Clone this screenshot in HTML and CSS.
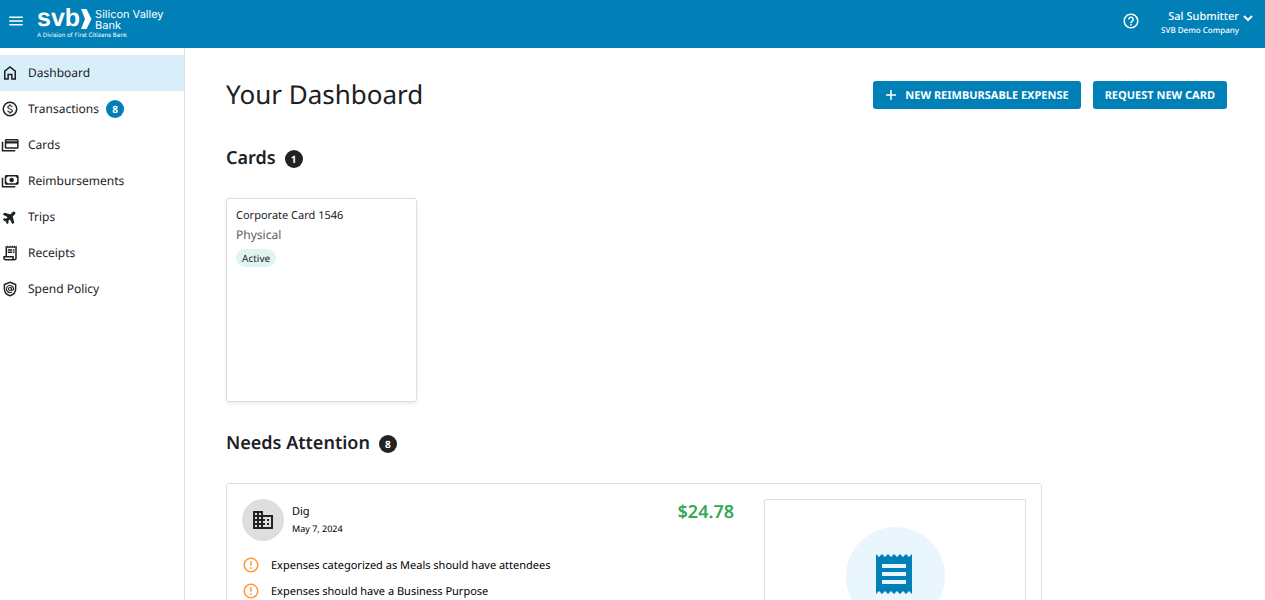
FILE: index.html
```html
<!DOCTYPE html>
<html lang="en">
<head>
<meta charset="utf-8">
<meta name="viewport" content="width=device-width, initial-scale=1">
<title>Your Dashboard</title>
<link rel="stylesheet" href="styles.css">
</head>
<body>
<header class="topbar">
  <button class="icon-button menu-button" type="button" aria-label="Menu">
    <svg viewBox="0 0 24 24" width="18" height="18"><path d="M3 18h18v-2H3v2zm0-5h18v-2H3v2zm0-7v2h18V6H3z"/></svg>
  </button>
  <div class="brand">
    <div class="brand-main">
      <span class="brand-mark">svb</span>
      <svg class="brand-chevron" viewBox="0 0 12 24" width="12" height="24"><path d="M1 2h5.500l5 10-5 10H1l4-10z"/></svg>
      <span class="brand-name"><span>Silicon Valley</span><span>Bank</span></span>
    </div>
    <span class="brand-tagline">A Division of First Citizens Bank</span>
  </div>
  <button class="icon-button help-button" type="button" aria-label="Help">
    <svg viewBox="0 0 24 24" width="18" height="18"><path d="M11 18h2v-2h-2v2zm1-16C6.48 2 2 6.48 2 12s4.48 10 10 10 10-4.48 10-10S17.52 2 12 2zm0 18c-4.41 0-8-3.59-8-8s3.59-8 8-8 8 3.59 8 8-3.59 8-8 8zm0-14c-2.21 0-4 1.79-4 4h2c0-1.1.9-2 2-2s2 .9 2 2c0 2-3 1.75-3 5h2c0-2.25 3-2.5 3-5 0-2.21-1.79-4-4-4z"/></svg>
  </button>
  <button class="account" type="button">
    <span class="account-text">
      <span class="account-name">Sal Submitter</span>
      <span class="account-company">SVB Demo Company</span>
    </span>
    <svg class="account-arrow" viewBox="0 0 12 12" width="12" height="12"><path d="M2 4l4 4 4-4"/></svg>
  </button>
</header>
<div class="body">
  <nav class="sidebar" aria-label="Main">
    <a class="nav-item active" href="#dashboard">
      <svg class="line" viewBox="0 0 24 24" width="18" height="18"><path d="M5 20V9.500l7-5.500 7 5.500V20h-4.500v-6h-5v6z"/></svg>
      <span>Dashboard</span></a>
    <a class="nav-item" href="#transactions">
      <svg class="line" viewBox="0 0 24 24" width="18" height="18"><circle cx="12" cy="12" r="9"/><path class="thin" d="M15 9.500C14.700 8.200 13.500 7.600 12 7.600c-1.700 0-2.900.8-2.900 2.100 0 3.100 6 1.500 6 4.600 0 1.300-1.200 2.100-3 2.100-1.700 0-3-.7-3.200-2.200M12 5.700v2M12 16.300v2"/></svg>
      <span>Transactions</span><span class="badge badge-blue">8</span></a>
    <a class="nav-item" href="#cards">
      <svg class="line" viewBox="0 0 24 24" width="18" height="18"><rect x="6" y="5" width="16.500" height="11" rx="1"/><path d="M6 8.500h16.500" stroke-width="3"/><path d="M2 7.500V19.500H19"/></svg>
      <span>Cards</span></a>
    <a class="nav-item" href="#reimbursements">
      <svg class="line" viewBox="0 0 24 24" width="18" height="18"><rect x="6" y="5" width="16.500" height="11" rx="1"/><path d="M2 7.500V19.500H19"/><circle class="solid" cx="14.200" cy="10.500" r="3"/><path class="solid" d="M6 5h3a3 3 0 0 1-3 3zM22.500 5h-3a3 3 0 0 0 3 3zM6 16h3a3 3 0 0 0-3-3zM22.500 16h-3a3 3 0 0 1 3-3z"/></svg>
      <span>Reimbursements</span></a>
    <a class="nav-item" href="#trips">
      <svg class="plane" viewBox="0 0 24 24" width="18" height="18"><path transform="translate(12 12) rotate(45) scale(.84) translate(-12 -12)" d="M22 16v-2l-8.500-5V3.500c0-.83-.67-1.500-1.500-1.500s-1.500.67-1.500 1.500V9L2 14v2l8.500-2.500V19L8 20.500V22l4-1 4 1v-1.500L13.500 19v-5.500L22 16z"/></svg>
      <span>Trips</span></a>
    <a class="nav-item" href="#receipts">
      <svg viewBox="0 0 24 24" width="18" height="18"><path d="M19.500 3.500L18 2l-1.500 1.500L15 2l-1.500 1.500L12 2l-1.500 1.500L9 2 7.500 3.500 6 2v14H3v3c0 1.660 1.340 3 3 3h12c1.660 0 3-1.340 3-3V2l-1.500 1.500zM15 20H6c-.55 0-1-.45-1-1v-1h10v2zm4-1c0 .55-.45 1-1 1s-1-.45-1-1v-3H8V5h11v14z"/><path d="M9 7h6v2H9zM16 7h2v2h-2zM9 10h6v2H9zM16 10h2v2h-2z"/></svg>
      <span>Receipts</span></a>
    <a class="nav-item" href="#policy">
      <svg class="line" viewBox="0 0 24 24" width="18" height="18"><path d="M12 3l7.500 3v5.500c0 4.500-3 8-7.500 9.500-4.500-1.500-7.500-5-7.500-9.500V6z"/><circle class="thin" cx="12" cy="12" r="2"/><path class="thin" d="M14 10v2.300c0 2 2.700 1.700 2.700-.3a4.700 4.700 0 1 0-2.200 4"/></svg>
      <span>Spend Policy</span></a>
  </nav>
  <main class="content">
    <div class="page-head">
      <h1 class="page-title">Your Dashboard</h1>
      <div class="actions">
        <button class="button" type="button">
          <svg viewBox="0 0 12 12" width="12" height="12"><path d="M6 1v10M1 6h10"/></svg>
          <span>NEW REIMBURSABLE EXPENSE</span></button>
        <button class="button" type="button"><span>REQUEST NEW CARD</span></button>
      </div>
    </div>
    <section class="section">
      <h2 class="section-title">Cards <span class="badge badge-dark">1</span></h2>
      <article class="card">
        <h3 class="card-name">Corporate Card 1546</h3>
        <p class="card-type">Physical</p>
        <span class="status">Active</span>
      </article>
    </section>
    <section class="section">
      <h2 class="section-title">Needs Attention <span class="badge badge-dark">8</span></h2>
      <article class="expense">
        <div class="expense-info">
          <div class="expense-head">
            <div class="avatar"><svg viewBox="0 0 24 24" width="24" height="24"><path d="M12 7V3H2v18h20V7H12zM6 19H4v-2h2v2zm0-4H4v-2h2v2zm0-4H4V9h2v2zm0-4H4V5h2v2zm4 12H8v-2h2v2zm0-4H8v-2h2v2zm0-4H8V9h2v2zm0-4H8V5h2v2zm10 12h-8v-2h2v-2h-2v-2h2v-2h-2V9h8v10zm-2-8h-2v2h2v-2zm0 4h-2v2h2v-2z"/></svg></div>
            <div class="merchant">
              <span class="merchant-name">Dig</span>
              <span class="merchant-date">May 7, 2024</span>
            </div>
            <span class="amount">$24.78</span>
          </div>
          <ul class="warnings">
            <li class="warning"><svg viewBox="0 0 24 24" width="18" height="18"><path d="M11 15h2v2h-2zm0-8h2v6h-2zm.99-5C6.470 2 2 6.480 2 12s4.470 10 9.990 10C17.520 22 22 17.520 22 12S17.520 2 11.990 2zM12 20c-4.420 0-8-3.580-8-8s3.580-8 8-8 8 3.580 8 8-3.580 8-8 8z"/></svg>Expenses categorized as Meals should have attendees</li>
            <li class="warning"><svg viewBox="0 0 24 24" width="18" height="18"><path d="M11 15h2v2h-2zm0-8h2v6h-2zm.99-5C6.470 2 2 6.480 2 12s4.470 10 9.990 10C17.520 22 22 17.520 22 12S17.520 2 11.990 2zM12 20c-4.420 0-8-3.580-8-8s3.580-8 8-8 8 3.580 8 8-3.580 8-8 8z"/></svg>Expenses should have a Business Purpose</li>
          </ul>
        </div>
        <div class="receipt-drop">
          <div class="receipt-circle"><svg viewBox="0 0 24 24" width="48" height="48"><path d="M18 17H6v-2h12v2zm0-4H6v-2h12v2zm0-4H6V7h12v2zM3 22l1.500-1.500L6 22l1.500-1.500L9 22l1.500-1.500L12 22l1.500-1.500L15 22l1.500-1.500L18 22l1.500-1.500L21 22V2l-1.500 1.500L18 2l-1.500 1.500L15 2l-1.500 1.500L12 2l-1.500 1.500L9 2 7.500 3.500 6 2 4.500 3.500 3 2v20z"/></svg></div>
        </div>
      </article>
    </section>
  </main>
</div>
</body>
</html>
```

FILE: styles.css
```css
* { box-sizing: border-box; }
body {
  margin: 0;
  height: 100vh;
  display: flex;
  flex-direction: column;
  font-family: "Noto Sans", sans-serif;
  font-size: 12px;
  text-rendering: geometricPrecision;
  color: #1c2125;
  background: #fff;
}
h1, h2, h3, p, ul { margin: 0; padding: 0; font-weight: 400; }
svg { flex: none; display: block; fill: currentColor; }
button { font: inherit; color: inherit; background: none; border: 0; padding: 0; cursor: pointer; text-rendering: inherit; }

.topbar {
  flex: none;
  height: 48px;
  display: flex;
  align-items: flex-start;
  padding: 0 11px 0 7px;
  background: #0080b7;
  color: #fff;
}
.icon-button { display: flex; }
.menu-button { margin-top: 12px; }
.brand { margin: 4px 0 0 12px; display: flex; flex-direction: column; font-family: Inter, "Liberation Sans", sans-serif; }
.brand-main { display: flex; align-items: center; height: 28px; }
.brand-mark { font-family: "Liberation Sans", sans-serif; font-weight: 700; font-size: 25px; line-height: 26px; }
.brand-chevron { margin: 2px 3px 0 0; }
.brand-name { display: flex; flex-direction: column; padding-top: 3px; font-size: 11px; line-height: 11px; }
.brand-tagline { font-size: 6px; line-height: 8px; white-space: nowrap; }
.help-button { margin: 12px 0 0 auto; }
.account { margin: 8px 0 0 21px; display: flex; gap: 3px; }
.account-text { display: flex; flex-direction: column; align-items: flex-end; }
.account-name { font-size: 11px; line-height: 18px; font-weight: 500; }
.account-company { font-size: 8px; line-height: 10px; font-weight: 500; }
.account-arrow { margin-top: 4px; fill: none; stroke: currentColor; stroke-width: 2; }

.body { flex: 1; min-height: 0; display: flex; }
.sidebar { flex: none; width: 185px; padding-top: 7px; border-right: 1px solid #dedede; }
.nav-item { display: flex; align-items: center; height: 36px; padding-left: 1px; color: inherit; text-decoration: none; line-height: 18px; }
.nav-item svg { margin-right: 9px; }
.nav-item.active { background: #d8eef8; }
.line { fill: none; stroke: currentColor; stroke-width: 2; }
.thin { stroke-width: 1.500; }
.solid { fill: currentColor; stroke: none; }
.plane { stroke: currentColor; stroke-width: 2; }

.badge {
  display: inline-flex;
  align-items: center;
  justify-content: center;
  width: 18px;
  height: 18px;
  border-radius: 50%;
  color: #fff;
  font-size: 10px;
  line-height: 18px;
  font-weight: 700;
}
.badge-blue { margin-left: 7px; background: #0080b7; }
.badge-dark { margin-top: 2px; background: #222; }

.content { flex: 1; min-width: 0; overflow-y: auto; scrollbar-width: none; padding: 28px 38px 28px 41px; }
.page-head { display: flex; align-items: flex-start; justify-content: space-between; margin-bottom: 32px; }
.page-title { font-size: 26px; line-height: 36px; }
.actions { display: flex; gap: 12px; padding-top: 5px; }
.button {
  display: flex;
  align-items: center;
  gap: 8px;
  height: 28px;
  padding: 0 12px;
  border-radius: 3px;
  background: #0080b7;
  color: #fff;
  font-size: 11px;
  font-weight: 700;
}
.button svg { fill: none; stroke: currentColor; stroke-width: 1.500; }

.section { margin-bottom: 27px; }
.section-title { display: flex; align-items: center; gap: 9px; font-size: 18px; line-height: 28px; font-weight: 600; margin-bottom: 26px; }
.card {
  width: 191px;
  min-height: 204px;
  padding: 8px 9px;
  border: 1px solid #dedede;
  border-radius: 3px;
  box-shadow: 0 2px 4px rgba(0, 0, 0, .08);
}
.card-name { font-size: 11px; line-height: 18px; }
.card-type { font-size: 12px; line-height: 20px; color: #5a6069; }
.status { display: inline-block; margin-top: 4px; padding: 0 6px; border-radius: 9px; background: #e0f4f1; font-size: 10px; line-height: 18px; }

.expense { display: flex; max-width: 816px; padding: 15px; border: 1px solid #dedede; border-radius: 3px; color: #000; }
.expense-info { flex: 1; padding-right: 30px; }
.expense-head { display: flex; gap: 8px; }
.avatar { display: flex; align-items: center; justify-content: center; width: 42px; height: 42px; border-radius: 50%; background: #dedede; color: #222; }
.merchant { display: flex; flex-direction: column; padding-top: 4px; }
.merchant-name { font-size: 11px; line-height: 18px; }
.merchant-date { font-size: 9px; line-height: 16px; }
.amount { margin-left: auto; font-size: 18px; line-height: 26px; font-weight: 600; color: #34a853; }
.warnings { list-style: none; margin-top: 11px; }
.warning { display: flex; align-items: center; gap: 11px; height: 26px; font-size: 11px; }
.warning svg { fill: #ff9838; }
.receipt-drop { width: 262px; padding: 27px 0; border: 1px solid #dedede; border-radius: 2px; }
.receipt-circle { display: flex; align-items: center; justify-content: center; width: 99px; height: 99px; margin: 0 auto; padding: 0 2px 5px 0; border-radius: 50%; background: #eaf6fd; color: #0080b7; }
```
